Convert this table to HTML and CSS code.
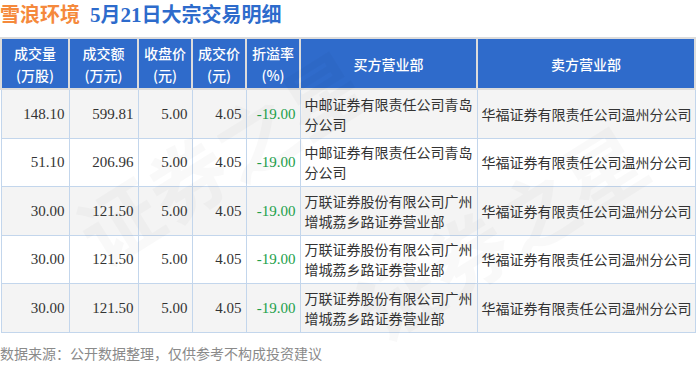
FILE: index.html
```html
<!DOCTYPE html>
<html lang="zh">
<head>
<meta charset="utf-8">
<link rel="stylesheet" href="styles.css">
</head>
<body>
<div class="page">
  <h1 class="title"><span class="stock">雪浪环境</span><span class="sub"><span class="num">5</span>月<span class="num">21</span>日大宗交易明细</span></h1>
  <table class="deals">
    <colgroup>
      <col class="c1"><col class="c2"><col class="c3"><col class="c4"><col class="c5"><col class="c6"><col class="c7">
    </colgroup>
    <thead>
      <tr>
        <th>成交量<br>(万股)</th>
        <th>成交额<br>(万元)</th>
        <th>收盘价<br>(元)</th>
        <th>成交价<br>(元)</th>
        <th>折溢率<br>(%)</th>
        <th>买方营业部</th>
        <th>卖方营业部</th>
      </tr>
    </thead>
    <tbody>
      <tr class="odd">
        <td class="n">148.10</td><td class="n">599.81</td><td class="n">5.00</td><td class="n">4.05</td><td class="n g">-19.00</td>
        <td class="t">中邮证券有限责任公司青岛分公司</td><td class="t">华福证券有限责任公司温州分公司</td>
      </tr>
      <tr>
        <td class="n">51.10</td><td class="n">206.96</td><td class="n">5.00</td><td class="n">4.05</td><td class="n g">-19.00</td>
        <td class="t">中邮证券有限责任公司青岛分公司</td><td class="t">华福证券有限责任公司温州分公司</td>
      </tr>
      <tr class="odd">
        <td class="n">30.00</td><td class="n">121.50</td><td class="n">5.00</td><td class="n">4.05</td><td class="n g">-19.00</td>
        <td class="t">万联证券股份有限公司广州增城荔乡路证券营业部</td><td class="t">华福证券有限责任公司温州分公司</td>
      </tr>
      <tr>
        <td class="n">30.00</td><td class="n">121.50</td><td class="n">5.00</td><td class="n">4.05</td><td class="n g">-19.00</td>
        <td class="t">万联证券股份有限公司广州增城荔乡路证券营业部</td><td class="t">华福证券有限责任公司温州分公司</td>
      </tr>
      <tr class="odd">
        <td class="n">30.00</td><td class="n">121.50</td><td class="n">5.00</td><td class="n">4.05</td><td class="n g">-19.00</td>
        <td class="t">万联证券股份有限公司广州增城荔乡路证券营业部</td><td class="t">华福证券有限责任公司温州分公司</td>
      </tr>
    </tbody>
  </table>
  <p class="source">数据来源：公开数据整理，仅供参考不构成投资建议</p>
  <div class="wm wm1">证券之星</div>
  <div class="wm wm2">证券之星</div>
</div>
</body>
</html>
```

FILE: styles.css
```css
html, body {
  margin: 0;
  padding: 0;
  background: #ffffff;
}
.page {
  position: relative;
  width: 696px;
  height: 365px;
  overflow: hidden;
  font-family: "Noto Sans CJK SC", "Noto Sans", sans-serif;
}
.title {
  margin: 0;
  height: 37px;
  font-size: 20px;
  line-height: 28px;
  font-weight: bold;
  white-space: nowrap;
}
.stock {
  color: #f5893c;
  margin-right: 10px;
}
.sub {
  color: #2d6bcc;
}
.num {
  font-family: "Liberation Serif", serif;
  font-size: 21px;
}
.deals {
  width: 694px;
  border-collapse: collapse;
  table-layout: fixed;
}
.c1 { width: 68px; }
.c2 { width: 69px; }
.c3 { width: 54px; }
.c4 { width: 54px; }
.c5 { width: 54px; }
.c6 { width: 177px; }
.c7 { width: 218px; }
.deals th {
  background: #2f6bcb;
  color: #ffffff;
  border: 2px solid #dcdcdc;
  font-size: 14px;
  line-height: 22px;
  font-weight: 500;
  height: 49px;
  padding: 0;
  text-align: center;
}
.deals td {
  border: 1px solid #c3d6ec;
  height: 47.5px;
  font-size: 14px;
  line-height: 20px;
  color: #333333;
  padding: 0;
}
.deals tr.odd td {
  background: #f4f4f4;
}
.deals td.n {
  text-align: right;
  font-family: "Liberation Serif", serif;
  font-size: 15px;
  padding-right: 4px;
}
.deals td.g {
  color: #21a04a;
}
.deals td.t {
  text-align: left;
  font-family: "Noto Sans CJK SC", sans-serif;
  padding-left: 4px;
}
.source {
  margin: 10px 0 0 0;
  font-size: 14px;
  line-height: 20px;
  color: #8a8a8a;
}
.wm {
  position: absolute;
  font-size: 80px;
  font-weight: bold;
  color: rgba(0, 0, 0, 0.025);
  white-space: nowrap;
  transform: rotate(-32deg);
  transform-origin: center center;
  pointer-events: none;
  line-height: 1;
}
.wm1 {
  left: 60px;
  top: 115px;
}
.wm2 {
  left: 340px;
  top: 190px;
}
```
